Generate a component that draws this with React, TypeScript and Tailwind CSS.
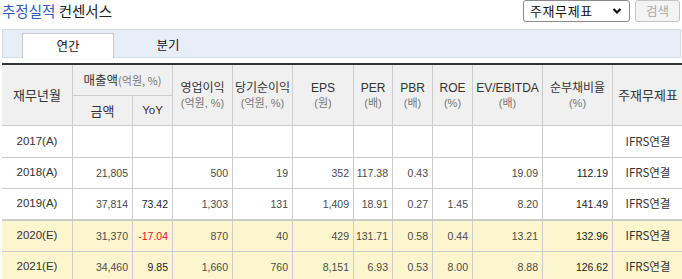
import React from 'react';

const cols = 'grid grid-cols-[71px_60px_40px_60px_60px_61px_39px_40px_40px_70px_70px_70px]';
const kr = { fontFamily: '"Noto Sans CJK KR", "Liberation Sans", sans-serif' };
const num = { fontFamily: '"Liberation Sans", "Noto Sans CJK KR", sans-serif' };

type Row = { cells: string[]; est: boolean; h: string; thick?: boolean };

const rows: Row[] = [
  { cells: ['2017(A)', '', '', '', '', '', '', '', '', '', '', 'IFRS연결'], est: false, h: 'h-[32px]' },
  { cells: ['2018(A)', '21,805', '', '500', '19', '352', '117.38', '0.43', '', '19.09', '112.19', 'IFRS연결'], est: false, h: 'h-[31px]' },
  { cells: ['2019(A)', '37,814', '73.42', '1,303', '131', '1,409', '18.91', '0.27', '1.45', '8.20', '141.49', 'IFRS연결'], est: false, h: 'h-[32px]', thick: true },
  { cells: ['2020(E)', '31,370', '-17.04', '870', '40', '429', '131.71', '0.58', '0.44', '13.21', '132.96', 'IFRS연결'], est: true, h: 'h-[31px]' },
  { cells: ['2021(E)', '34,460', '9.85', '1,660', '760', '8,151', '6.93', '0.53', '8.00', '8.88', '126.62', 'IFRS연결'], est: true, h: 'h-[31px]' },
];

function Head2({ a, b }: { a: string; b: string }) {
  return (
    <div className="row-span-2 flex flex-col items-center justify-center border-r border-b border-[#cccccc] pt-[1px]" style={num}>
      <span className="block h-[15px] text-[12px] leading-[15px] text-[#333] whitespace-nowrap">{a}</span>
      <span className="block h-[14px] text-[11px] leading-[14px] text-[#777] whitespace-nowrap">{b}</span>
    </div>
  );
}

export default function App() {
  return (
    <div className="w-[682px] h-[279px] overflow-hidden bg-white" style={kr}>
      {/* top row */}
      <div className="flex h-[22px] items-start justify-between">
        <div className="ml-[2px] mt-[2px] text-[14.5px] leading-[18px] whitespace-nowrap">
          <span className="text-[#2f5bbd]">추정실적</span> <span className="text-[#222]">컨센서스</span>
        </div>
        <div className="flex gap-[5px] mr-[2px]">
          <div className="flex h-[22px] w-[107px] items-center justify-between rounded-[3px] border border-[#8a8a8a] bg-white pl-[6px] pr-[7px]">
            <span className="text-[13px] tracking-[0.6px] text-[#111]">주재무제표</span>
            <svg width="10" height="8" viewBox="0 0 10 8">
              <path d="M1.5 2 L5 5.5 L8.5 2" fill="none" stroke="#111" strokeWidth="2.2" />
            </svg>
          </div>
          <div className="flex h-[22px] w-[45px] items-center justify-center rounded-[3px] border border-[#c4c4c4] bg-[#f3f3f3] text-[12.5px] text-[#a8a8a8]">
            검색
          </div>
        </div>
      </div>

      {/* tab bar */}
      <div className="mt-[7px] ml-[2px] flex h-[29px] w-[679px] items-end border border-[#d3dbe6] bg-[#e8eef8]">
        <div className="-mb-px ml-[19px] flex h-[25px] w-[92px] items-center justify-center border border-b-0 border-[#c9c9c9] bg-white text-[12.5px] text-[#111]">
          연간
        </div>
        <div className="ml-[8px] flex h-[24px] w-[92px] items-center justify-center text-[12.5px] text-[#111]">
          분기
        </div>
      </div>

      {/* table */}
      <div className="mt-[5px] ml-[2px] w-[683px] border-t-2 border-[#333333]">
        <div className={`${cols} grid-rows-[31px_30px] bg-[#f0f0f0]`}>
          <div className="row-span-2 flex items-center justify-center border-r border-b border-[#cccccc] text-[13px] text-[#333]">재무년월</div>
          <div className="col-span-2 flex items-center justify-center border-r border-b border-[#cccccc] whitespace-nowrap">
            <span className="text-[12.5px] text-[#333]">매출액</span>
            <span className="text-[11px] text-[#777]">(억원, %)</span>
          </div>
          <Head2 a="영업이익" b="(억원, %)" />
          <Head2 a="당기순이익" b="(억원, %)" />
          <Head2 a="EPS" b="(원)" />
          <Head2 a="PER" b="(배)" />
          <Head2 a="PBR" b="(배)" />
          <Head2 a="ROE" b="(%)" />
          <Head2 a="EV/EBITDA" b="(배)" />
          <Head2 a="순부채비율" b="(%)" />
          <div className="row-span-2 flex items-center justify-center border-b border-[#cccccc] text-[13px] text-[#333]">주재무제표</div>
          <div className="flex items-center justify-center border-r border-b border-[#cccccc] text-[13px] text-[#333]">금액</div>
          <div className="flex items-center justify-center border-r border-b border-[#cccccc] text-[11.5px] text-[#333]" style={num}>YoY</div>
        </div>

        {rows.map((r, i) => (
          <div
            key={i}
            className={`${cols} ${r.h} ${r.est ? 'bg-[#fcf6cf]' : 'bg-white'} ${r.thick ? 'border-b-2' : 'border-b'} border-[#cccccc]`}
          >
            {r.cells.map((c, j) => {
              const last = j === r.cells.length - 1;
              const first = j === 0;
              let color = 'text-[#4a4a4a]';
              if (j === 2 || j === 10) color = 'text-[#222]';
              if (c.startsWith('-')) color = 'text-[#e8101a]';
              return (
                <div
                  key={j}
                  className={`flex items-center ${first || last ? 'justify-center' : 'justify-end pr-[4px] pt-[2px]'} ${last ? '' : 'border-r border-[#cccccc]'} ${first || last ? 'text-[11.5px] text-[#333]' : `text-[10.5px] ${color}`}`}
                  style={last ? kr : num}
                >
                  {c}
                </div>
              );
            })}
          </div>
        ))}
      </div>
    </div>
  );
}
